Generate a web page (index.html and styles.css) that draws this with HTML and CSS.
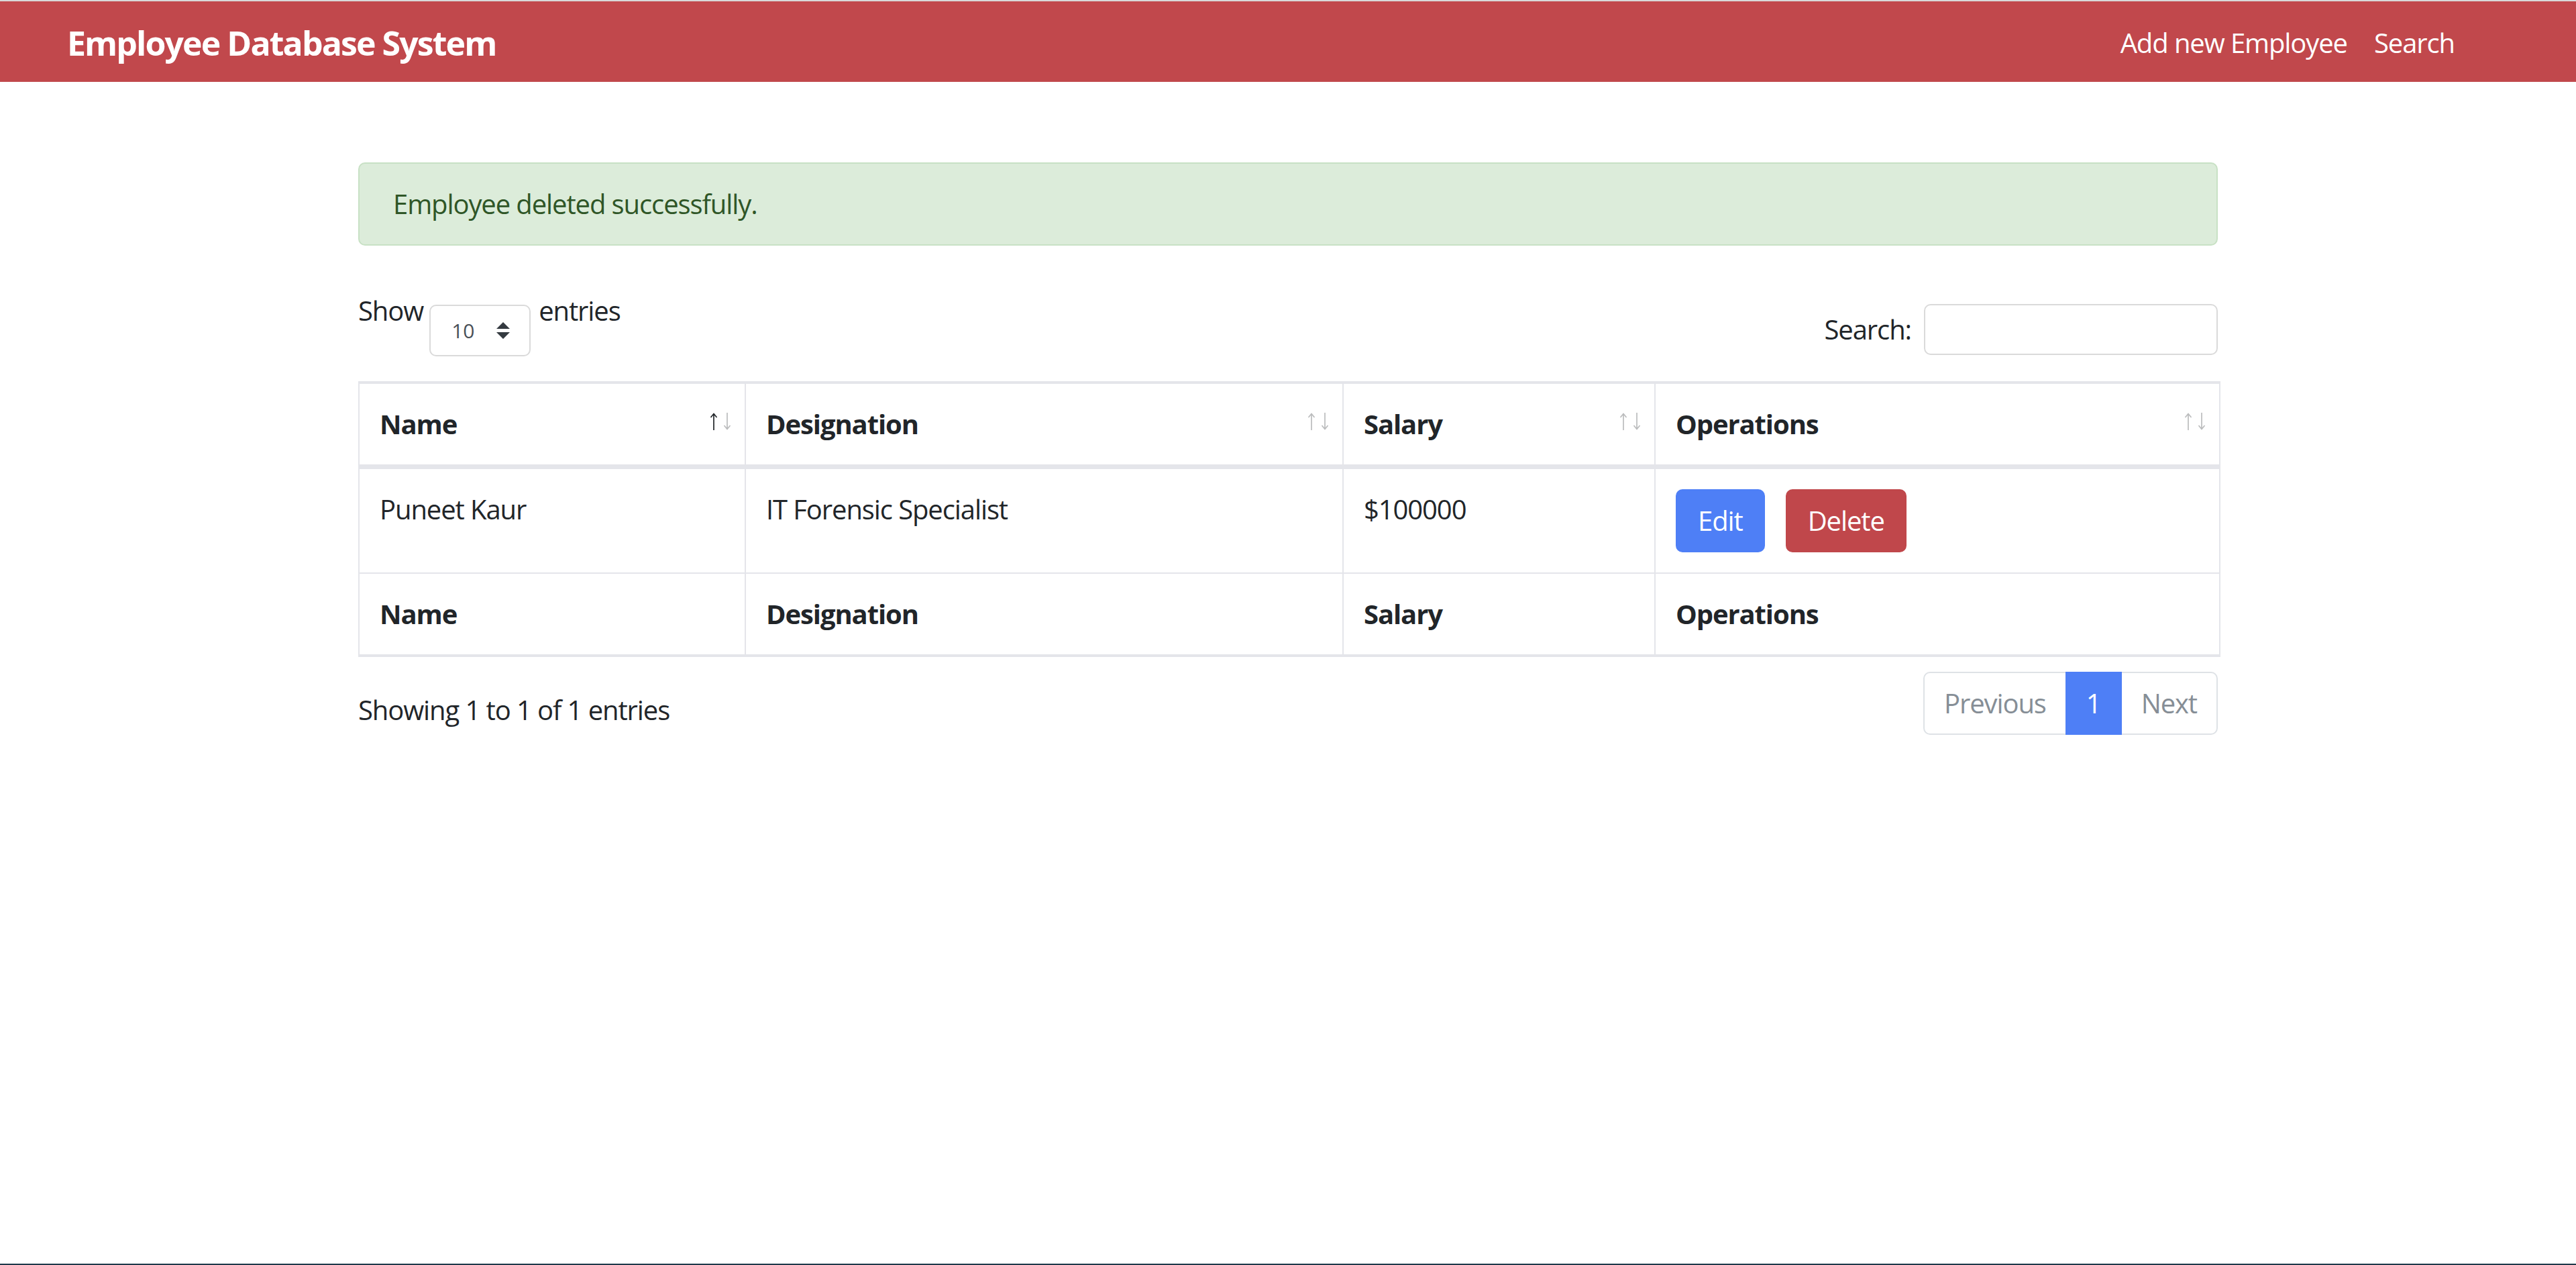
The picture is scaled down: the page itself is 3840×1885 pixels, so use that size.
FILE: index.html
```html
<!DOCTYPE html>
<html lang="en">
<head>
<meta charset="utf-8">
<title>Employee Database System</title>
<link rel="stylesheet" href="styles.css">
</head>
<body>
<nav class="navbar">
  <a class="brand" href="#">Employee Database System</a>
  <div class="nav-links">
    <a class="nav-link" href="#">Add new Employee</a>
    <a class="nav-link" href="#">Search</a>
  </div>
</nav>

<main class="container">
  <div class="alert">Employee deleted successfully.</div>

  <div class="dt-top">
    <div class="dt-length">
      <span class="lbl">Show</span>
      <div class="select">
        <span class="select-val">10</span>
        <svg class="select-arrow" viewBox="0 0 4 5" width="20" height="25"><path fill="#343a40" d="M2 0L0 2h4zm0 5L0 3h4z"/></svg>
      </div>
      <span class="lbl">entries</span>
    </div>
    <div class="dt-filter">
      <span class="lbl search-lbl">Search:</span>
      <div class="input"></div>
    </div>
  </div>

  <table class="dt-table">
    <colgroup>
      <col class="c-name">
      <col class="c-desig">
      <col class="c-salary">
      <col class="c-ops">
    </colgroup>
    <thead>
      <tr>
        <th class="sorting">Name
          <span class="sort"><svg class="arr on" viewBox="0 0 12 28" width="12" height="28"><path d="M6 27V2.5M1.5 8L6 2.5 10.5 8"/></svg><svg class="arr" viewBox="0 0 12 28" width="12" height="28"><path d="M6 1v24.5M1.5 20L6 25.5 10.5 20"/></svg></span>
        </th>
        <th class="sorting">Designation
          <span class="sort"><svg class="arr" viewBox="0 0 12 28" width="12" height="28"><path d="M6 27V2.5M1.5 8L6 2.5 10.5 8"/></svg><svg class="arr" viewBox="0 0 12 28" width="12" height="28"><path d="M6 1v24.5M1.5 20L6 25.5 10.5 20"/></svg></span>
        </th>
        <th class="sorting">Salary
          <span class="sort"><svg class="arr" viewBox="0 0 12 28" width="12" height="28"><path d="M6 27V2.5M1.5 8L6 2.5 10.5 8"/></svg><svg class="arr" viewBox="0 0 12 28" width="12" height="28"><path d="M6 1v24.5M1.5 20L6 25.5 10.5 20"/></svg></span>
        </th>
        <th class="sorting">Operations
          <span class="sort"><svg class="arr" viewBox="0 0 12 28" width="12" height="28"><path d="M6 27V2.5M1.5 8L6 2.5 10.5 8"/></svg><svg class="arr" viewBox="0 0 12 28" width="12" height="28"><path d="M6 1v24.5M1.5 20L6 25.5 10.5 20"/></svg></span>
        </th>
      </tr>
    </thead>
    <tbody>
      <tr>
        <td>Puneet Kaur</td>
        <td>IT Forensic Specialist</td>
        <td>$100000</td>
        <td>
          <div class="ops">
            <a class="btn btn-edit" href="#">Edit</a>
            <a class="btn btn-delete" href="#">Delete</a>
          </div>
        </td>
      </tr>
    </tbody>
    <tfoot>
      <tr>
        <th>Name</th>
        <th>Designation</th>
        <th>Salary</th>
        <th>Operations</th>
      </tr>
    </tfoot>
  </table>

  <div class="dt-bottom">
    <div class="dt-info">Showing 1 to 1 of 1 entries</div>
    <ul class="pagination">
      <li class="page-item disabled"><a class="page-link" href="#">Previous</a></li>
      <li class="page-item active"><a class="page-link" href="#">1</a></li>
      <li class="page-item disabled"><a class="page-link" href="#">Next</a></li>
    </ul>
  </div>
</main>

<div class="page-end"></div>
</body>
</html>
```

FILE: styles.css
```css
* { box-sizing: border-box; }

html, body { height: 100%; }

body {
  margin: 0;
  min-height: 1885px;
  display: flex;
  flex-direction: column;
  font-family: "Open Sans", "Noto Sans", sans-serif;
  font-size: 40px;
  line-height: 60px;
  letter-spacing: -1.1px;
  color: #212529;
  background: #ffffff;
}

a { text-decoration: none; }

/* NAVBAR */
.navbar {
  height: 122px;
  border-top: 2px solid #d9d9d9;
  background: #c1484c;
  display: flex;
  align-items: center;
  justify-content: space-between;
  padding: 4px 161px 0 100px;
}

.brand {
  color: #ffffff;
  font-weight: 700;
  font-size: 50px;
  line-height: 75px;
  letter-spacing: -1.9px;
}

.nav-links {
  display: flex;
}

.nav-link {
  color: #ffffff;
  padding: 0 20px;
  line-height: 60px;
}

/* CONTAINER */
.container {
  width: 2772px;
  margin: 0 auto;
}

.alert {
  margin-top: 120px;
  margin-bottom: 40px;
  padding: 30px 50px;
  border: 2px solid #c8e1c5;
  border-radius: 10px;
  background: #dcecda;
  color: #2f5627;
}

/* DATATABLE TOP CONTROLS */
.dt-top {
  display: flex;
  justify-content: space-between;
  align-items: flex-start;
  margin-bottom: 37px;
}

.dt-length {
  display: flex;
  align-items: flex-start;
  padding-top: 27px;
}

.select {
  margin: 21px 12px 0 9px;
  width: 151px;
  height: 77px;
  border: 2px solid #dadada;
  border-radius: 10px;
  display: flex;
  align-items: center;
  justify-content: space-between;
  padding: 0 29px 0 31px;
}

.select-val {
  font-size: 30px;
  line-height: 40px;
  letter-spacing: 0;
  color: #495057;
}

.select-arrow { display: block; }

.dt-filter {
  display: flex;
  align-items: center;
  margin-top: 47px;
}

.search-lbl { margin-right: 19px; }

.input {
  width: 438px;
  height: 76px;
  border: 2px solid #dadada;
  border-radius: 10px;
  background: #ffffff;
}

/* TABLE */
.dt-table {
  width: 2772px;
  table-layout: fixed;
  border-collapse: separate;
  border-spacing: 0;
  border: 2px solid #e4e5ea;
}

.c-name { width: 576px; }
.c-desig { width: 891px; }
.c-salary { width: 465px; }
.c-ops { width: 840px; }

.dt-table th,
.dt-table td {
  border-top: 2px solid #e4e5ea;
  border-right: 2px solid #e4e5ea;
  padding: 30px;
  text-align: left;
}

.dt-table th:last-child,
.dt-table td:last-child { border-right: 0; }

.dt-table th { font-weight: 700; }

.dt-table thead th {
  border-bottom: 5px solid #e4e5ea;
  vertical-align: bottom;
}

.dt-table td { vertical-align: top; }

.dt-table tfoot th {
  border-bottom: 2px solid #e4e5ea;
  vertical-align: top;
}

.dt-table th.sorting {
  position: relative;
  padding-right: 75px;
}

.sort {
  position: absolute;
  right: 20px;
  top: 42px;
  display: flex;
  gap: 8px;
}

.arr {
  display: block;
  fill: none;
  stroke: #212529;
  stroke-width: 1.7;
  opacity: 0.3;
}

.arr.on { opacity: 1; }

.ops {
  display: flex;
  gap: 31px;
}

.btn {
  display: block;
  color: #ffffff;
  padding: 15px 31px;
  line-height: 60px;
  border: 2px solid transparent;
  border-radius: 10px;
}

.btn-edit { background: #4e7ff6; border-color: #4e7ff6; }
.btn-delete { background: #c0474b; border-color: #c0474b; }

/* DATATABLE BOTTOM */
.dt-bottom {
  display: flex;
  justify-content: space-between;
  align-items: flex-start;
  margin-top: 15px;
}

.dt-info { padding-top: 34px; }

.pagination {
  display: flex;
  list-style: none;
  margin: 7px 0 0;
  padding: 0;
}

.page-link {
  display: block;
  position: relative;
  padding: 20px 29px;
  line-height: 50px;
  border: 2px solid #dee2e6;
  color: #6c757d;
  background: #ffffff;
  margin-left: -2px;
}

.page-item:first-child .page-link {
  margin-left: 0;
  border-radius: 10px 0 0 10px;
}

.page-item:last-child .page-link {
  border-radius: 0 10px 10px 0;
}

.page-item.disabled .page-link { color: #868e96; }

.page-item.active .page-link {
  z-index: 1;
  color: #ffffff;
  background: #4e7ff6;
  border-color: #4e7ff6;
}

.page-end {
  margin-top: auto;
  height: 2px;
  background: #1f3a4b;
}
```
